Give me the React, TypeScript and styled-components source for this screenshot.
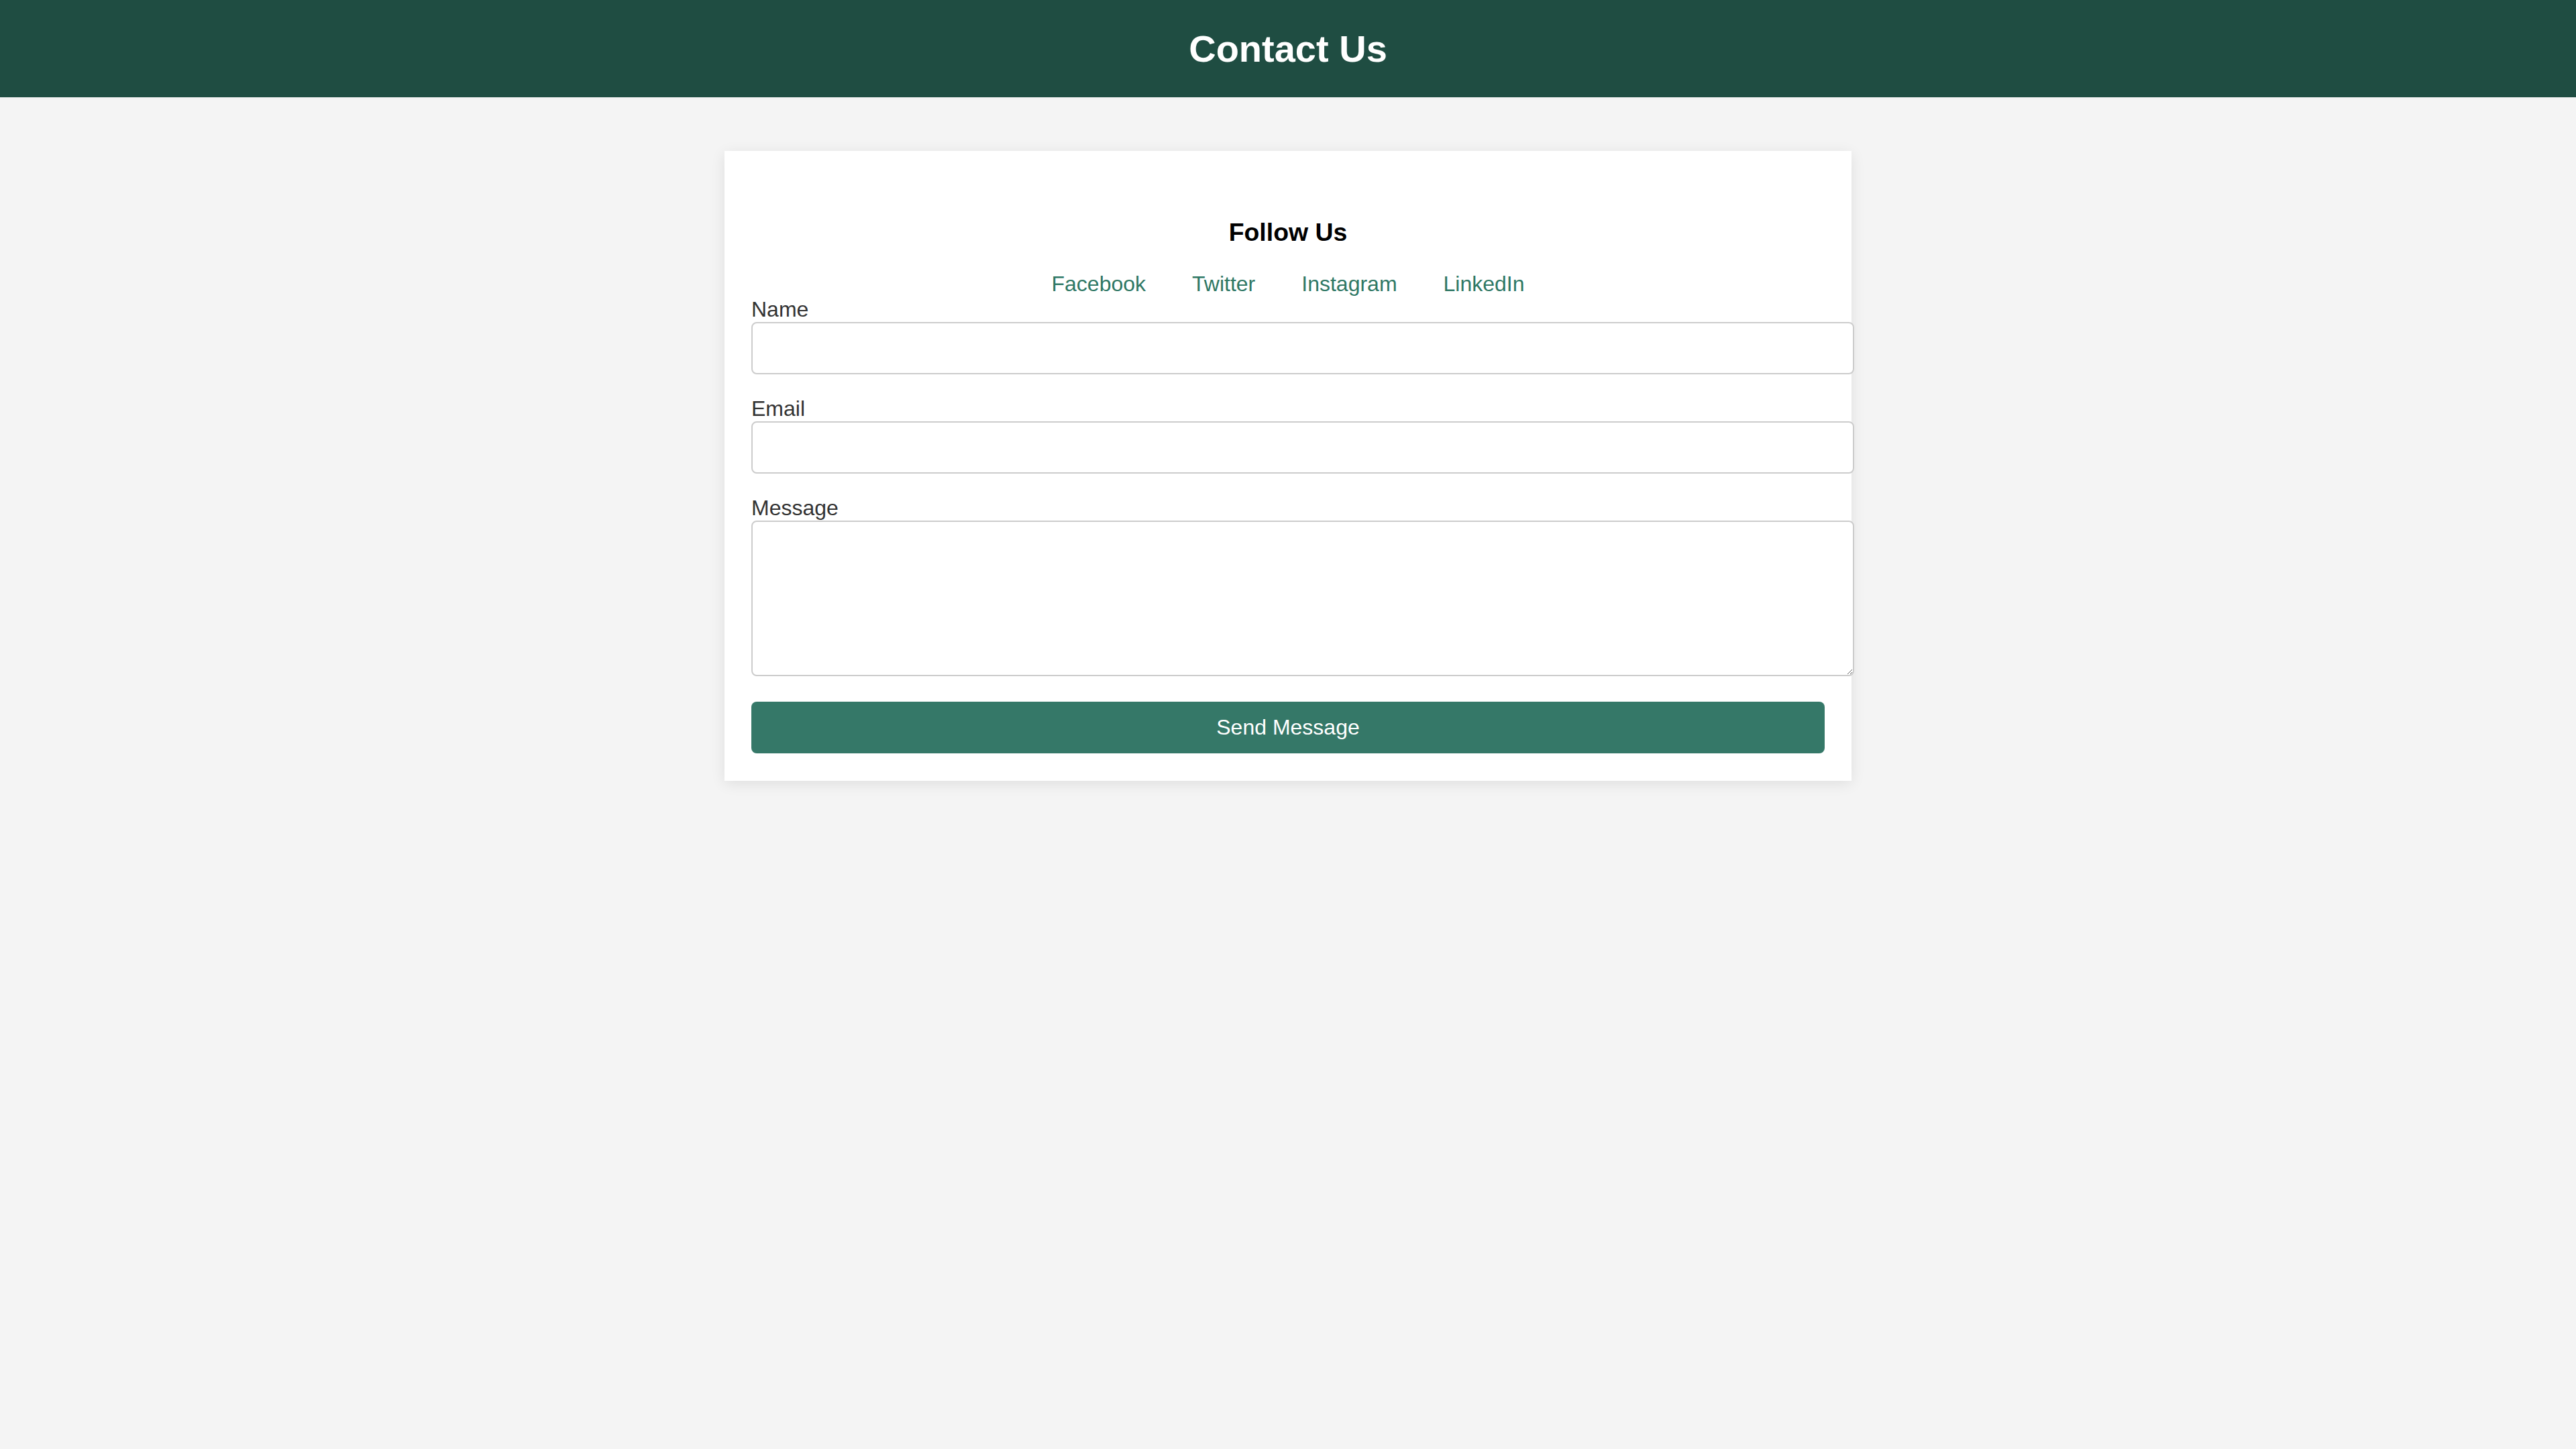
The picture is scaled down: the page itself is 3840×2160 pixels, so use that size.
import React from "react";
import styled, { createGlobalStyle } from "styled-components";

const GlobalStyle = createGlobalStyle`
  html, body {
    margin: 0;
    padding: 0;
    background: #f4f4f4;
    font-family: "Liberation Sans", Arial, sans-serif;
  }
  * { box-sizing: border-box; }
`;

const Header = styled.header`
  height: 145px;
  background: #1f4d42;
  display: flex;
  align-items: center;
  justify-content: center;
`;

const Title = styled.h1`
  margin: 0;
  color: #ffffff;
  font-size: 56px;
  font-weight: 700;
  line-height: normal;
`;

const Main = styled.main`
  padding: 80px 0;
`;

const Card = styled.section`
  width: 1680px;
  margin: 0 auto;
  background: #ffffff;
  padding: 100px 40px 41px;
  box-shadow: 0 4px 20px rgba(0, 0, 0, 0.09);
`;

const SocialHeading = styled.h3`
  margin: 0;
  text-align: center;
  font-size: 37.44px;
  font-weight: 700;
  line-height: 43px;
  color: #000000;
`;

const SocialRow = styled.nav`
  margin-top: 37px;
  display: flex;
  justify-content: center;
  gap: 69px;
  line-height: 37px;
`;

const SocialLink = styled.a`
  color: #2f7865;
  font-size: 32px;
  text-decoration: none;
`;

const Form = styled.form`
  display: flex;
  flex-direction: column;
`;

const Label = styled.label`
  display: block;
  color: #333333;
  font-size: 32px;
  line-height: 38px;
`;

const fieldBase = `
  display: block;
  box-sizing: content-box;
  width: 100%;
  padding: 20px;
  border: 2px solid #cccccc;
  border-radius: 8px;
  background: #ffffff;
  font-family: "Liberation Sans", Arial, sans-serif;
  font-size: 28px;
  color: #333333;
  margin: 0;
  outline: none;
`;

const TextInput = styled.input<{ $gapAfter: number }>`
  ${fieldBase}
  height: 34px;
  margin-bottom: ${(p) => p.$gapAfter}px;
`;

const TextArea = styled.textarea`
  ${fieldBase}
  height: 188px;
  resize: vertical;
`;

const SubmitButton = styled.button`
  margin-top: 38px;
  width: 100%;
  height: 77px;
  border: none;
  border-radius: 8px;
  background: #357868;
  color: #ffffff;
  font-family: "Liberation Sans", Arial, sans-serif;
  font-size: 32px;
  cursor: pointer;
`;

const links = ["Facebook", "Twitter", "Instagram", "LinkedIn"];

export default function App() {
  return (
    <>
      <GlobalStyle />
      <Header>
        <Title>Contact Us</Title>
      </Header>
      <Main>
        <Card>
          <SocialHeading>Follow Us</SocialHeading>
          <SocialRow>
            {links.map((l) => (
              <SocialLink key={l} href="#">
                {l}
              </SocialLink>
            ))}
          </SocialRow>
          <Form onSubmit={(e) => e.preventDefault()}>
            <Label htmlFor="name">Name</Label>
            <TextInput id="name" type="text" $gapAfter={32} />
            <Label htmlFor="email">Email</Label>
            <TextInput id="email" type="email" $gapAfter={32} />
            <Label htmlFor="message">Message</Label>
            <TextArea id="message" />
            <SubmitButton type="submit">Send Message</SubmitButton>
          </Form>
        </Card>
      </Main>
    </>
  );
}
